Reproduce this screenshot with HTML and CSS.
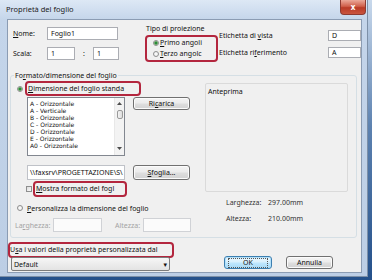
FILE: index.html
```html
<!DOCTYPE html>
<html lang="it">
<head>
    <meta charset="UTF-8">
    <title>Proprietà del foglio</title>
    <link rel="stylesheet" href="styles.css">
</head>
<body>
    <div class="desk">
        <div class="window">
            <div class="titlebar">
                <span class="title">Proprietà del foglio</span>
                <span class="close">x</span>
            </div>

            <div class="client">
                <!-- name / scale / projection / labels -->
                <div class="top">
                    <div class="ident">
                        <div class="row">
                            <span class="lbl"><u>N</u>ome:</span>
                            <span class="box w-name">Foglio1</span>
                        </div>
                        <div class="row">
                            <span class="lbl">Scala:</span>
                            <span class="box w-scale">1</span>
                            <span class="colon">:</span>
                            <span class="box w-scale2">1</span>
                        </div>
                    </div>

                    <div class="proj">
                        <div class="cap">Tipo di proiezione</div>
                        <div class="mark mark-proj">
                            <div class="opt"><span class="radio on"></span><span><u>P</u>rimo angoli</span></div>
                            <div class="opt"><span class="radio"></span><span><u>T</u>erzo angolc</span></div>
                        </div>
                    </div>

                    <div class="tags">
                        <div class="tag-row"><span class="tag-lbl">Etichetta di <u>v</u>ista</span><span class="box w-tag">D</span></div>
                        <div class="tag-row"><span class="tag-lbl">Etichetta ri<u>f</u>erimento</span><span class="box w-tag">A</span></div>
                    </div>
                </div>

                <fieldset class="group">
                    <legend>Fo<u>r</u>mato/dimensione del foglio</legend>
                    <div class="group-body">
                        <div class="left">
                            <div class="std">
                                <span class="radio on"></span>
                                <span class="mark mark-std"><u>D</u>imensione del foglio standa</span>
                            </div>

                            <div class="list-row">
                                <div class="list">
                                    <div class="items">
                                        <div>A - Orizzontale</div>
                                        <div>A - Verticale</div>
                                        <div>B - Orizzontale</div>
                                        <div>C - Orizzontale</div>
                                        <div>D - Orizzontale</div>
                                        <div>E - Orizzontale</div>
                                        <div>A0 - Orizzontale</div>
                                    </div>
                                    <div class="scroll">
                                        <span class="arrow">
                                            <svg width="5" height="3" viewBox="0 0 5 3"><path d="M0 3 L2.5 0 L5 3 Z" fill="#4d4d4d"/></svg>
                                        </span>
                                        <span class="thumb"></span>
                                        <span class="arrow down">
                                            <svg width="5" height="3" viewBox="0 0 5 3"><path d="M0 0 L2.5 3 L5 0 Z" fill="#4d4d4d"/></svg>
                                        </span>
                                    </div>
                                </div>
                                <span class="btn btn-small">Ri<u>c</u>arica</span>
                            </div>

                            <div class="path-row">
                                <span class="box w-path">\\faxsrv\PROGETTAZIONE\S\</span>
                                <span class="btn btn-path"><u>S</u>foglia...</span>
                            </div>

                            <div class="check-row">
                                <span class="check"></span>
                                <span class="mark mark-check"><u>M</u>ostra formato del fogl</span>
                            </div>

                            <div class="custom-row">
                                <span class="radio"></span>
                                <span><u>P</u>ersonalizza la dimensione del foglio</span>
                            </div>

                            <div class="dims-row">
                                <span class="dis-lbl w-larg">La<u>r</u>ghezza:</span>
                                <span class="box dis-box w-lbox"></span>
                                <span class="dis-lbl w-alt">Altezza:</span>
                                <span class="box dis-box w-abox"></span>
                            </div>
                        </div>

                        <div class="right">
                            <div class="preview">Anteprima</div>
                            <div class="size-row"><span class="size-lbl">Larghezza:</span><span>297.00mm</span></div>
                            <div class="size-row"><span class="size-lbl">Altezza:</span><span>210.00mm</span></div>
                        </div>
                    </div>
                </fieldset>

                <div class="bottom">
                    <div class="preset">
                        <span class="mark mark-preset">U<u>s</u>a i valori della proprietà personalizzata dal</span>
                        <span class="select">Default<span class="caret">▾</span></span>
                    </div>
                    <div class="actions">
                        <span class="btn btn-ok"><span class="focus">OK</span></span>
                        <span class="btn btn-cancel">Annulla</span>
                    </div>
                </div>
            </div>
        </div>
        <div class="edge"></div>
    </div>
</body>
</html>
```

FILE: styles.css
```css
:root {
    --face: #f0f0f0; --frame: #c4d5ea; --input-border: #abadb3;
    --mark: #b3263e; --disabled: #a3a3a3; --btn-border: #707070;
}
body { margin: 0; font-family: 'Noto Sans', 'DejaVu Sans', sans-serif; font-size: 7px; color: #111; }
u { text-decoration: underline; text-underline-offset: 1px; }

.desk { display: flex; width: 372px; height: 280px; background: linear-gradient(#c9d9ec, #5d82b0 45%, #24508a); }
.window { width: 368px; height: 277px; box-sizing: border-box; display: flex; flex-direction: column; background: linear-gradient(#dde8f5, var(--frame) 20px, #bccee5); border-right: 1px solid #7d90a8; border-bottom: 1px solid #7d90a8; }
.edge { flex: 1; }

.titlebar { height: 19px; display: flex; justify-content: space-between; align-items: flex-start; padding-left: 6px; flex-shrink: 0; }
.title { font-size: 7.5px; line-height: 18px; color: #1b1b1b; }
.close { width: 26px; height: 15px; box-sizing: border-box; margin-right: 1px; border: 1px solid #8d3a31; border-top: none; border-radius: 0 0 4px 4px; background: linear-gradient(#eba899, #d0604b 45%, #b93a26 55%, #c9553f); color: #fff; font-weight: bold; font-size: 8px; line-height: 13px; text-align: center; }

.client { flex: 1; margin: 0 5px 3px 7px; background: var(--face); border: 1px solid #8b9cb3; display: flex; flex-direction: column; }

.box { background: #fff; border: 1px solid var(--input-border); box-sizing: border-box; padding: 0 3px; white-space: nowrap; overflow: hidden; display: flex; align-items: center; }
.mark { border: 2px solid var(--mark); border-radius: 4px; box-sizing: border-box; white-space: nowrap; overflow: hidden; }
.radio { width: 6px; height: 6px; box-sizing: border-box; border-radius: 50%; border: 1px solid #8e8f8f; background: radial-gradient(#fff, #e6e6e6); flex-shrink: 0; }
.radio.on { background: radial-gradient(#2a8a3a 0 1.2px, #6fb56c 1.6px, #e9efe9 2.4px); }
.check { width: 6px; height: 6px; box-sizing: border-box; border: 1px solid #8e8f8f; background: linear-gradient(135deg, #dcdcdc, #fbfbfb); flex-shrink: 0; }

/* top block */
.top { display: flex; height: 39px; padding: 4px 0 0 5px; flex-shrink: 0; }
.ident { margin-top: 3px; width: 106px; display: flex; flex-direction: column; gap: 7px; }
.row { display: flex; align-items: center; height: 13px; }
.lbl { width: 34px; }
.w-name { width: 71px; height: 13px; }
.w-scale { width: 28px; height: 13px; }
.w-scale2 { width: 26px; height: 13px; }
.colon { width: 18px; text-align: center; }

.proj { margin-left: 26px; width: 74px; }
.cap { line-height: 9px; padding-left: 1px; }
.mark-proj { margin-top: 2px; height: 27px; padding: 0 0 0 6px; }
.opt { display: flex; align-items: center; gap: 1px; height: 11px; }

.tags { margin-left: 1px; padding-top: 6px; display: flex; flex-direction: column; gap: 6px; }
.tag-row { display: flex; align-items: center; height: 11px; }
.tag-lbl { width: 109px; }
.w-tag { width: 33px; height: 11px; }

/* paper size group */
.group { margin: 8px 4px 0 2px; padding: 0 8px 5px 6px; border: 1px solid #d5dfe5; border-radius: 3px; min-width: 0; }
.group legend { padding: 0 1px; margin-left: -3px; line-height: 9px; }
.group-body { display: flex; gap: 10px; }
.left { width: 178px; display: flex; flex-direction: column; }

.std { display: flex; align-items: center; margin-top: 1px; gap: 2px; }
.mark-std { width: 116px; height: 15px; padding-left: 1px; line-height: 11px; }

.list-row { display: flex; gap: 8px; margin: 1px 0 0 10px; align-items: flex-start; }
.list { width: 98px; height: 59px; box-sizing: border-box; border: 1px solid #828790; background: #fff; display: flex; overflow: hidden; }
.items { flex: 1; padding: 2px 0 0 2px; font-family: 'DejaVu Sans', sans-serif; font-size: 6px; line-height: 7px; white-space: nowrap; }
.scroll { width: 9px; display: flex; flex-direction: column; align-items: center; background: #f3f3f3; border-left: 1px solid #e8e8e8; padding-top: 2px; }
.arrow { height: 7px; display: flex; align-items: center; }
.arrow.down { margin-top: auto; margin-bottom: 3px; }
.thumb { width: 6px; height: 9px; margin-top: 3px; box-sizing: border-box; border: 1px solid #9a9a9a; border-radius: 2px; background: linear-gradient(90deg, #f4f4f4, #dcdcdc); }

.btn { box-sizing: border-box; border: 1px solid var(--btn-border); border-radius: 3px; background: linear-gradient(#f4f4f4 0, #ececec 45%, #dedede 55%, #d2d2d2); box-shadow: inset 0 0 0 1px #fbfbfb; display: flex; align-items: center; justify-content: center; white-space: nowrap; }
.btn-small { width: 57px; height: 13px; }
.btn-path { width: 57px; height: 15px; }

.path-row { display: flex; gap: 8px; margin: 9px 0 0 10px; }
.w-path { width: 98px; height: 15px; padding-left: 2px; border-color: #bfc2c8; }

.check-row { display: flex; align-items: center; gap: 1px; margin: 1px 0 0 9px; }
.mark-check { width: 94px; height: 16px; padding-left: 1px; line-height: 12px; }

.custom-row { display: flex; align-items: center; gap: 4px; height: 10px; margin-top: 6px; }

.dims-row { display: flex; align-items: center; height: 14px; margin: 5px 0 0 -2px; }
.dis-lbl { color: var(--disabled); }
.dis-box { height: 14px; border-color: #d0d2d6; background: #fbfbfb; }
.w-larg { width: 38px; }
.w-lbox { width: 49px; }
.w-alt { width: 28px; margin-left: 13px; }
.w-abox { width: 48px; }

.right { width: 143px; }
.preview { height: 109px; margin-top: 3px; box-sizing: border-box; border: 1px solid #dadada; border-radius: 2px; padding: 3px 2px; line-height: 9px; }
.size-row { display: flex; line-height: 10px; margin-top: 6px; color: #333; }
.size-row:first-of-type { margin-top: 10px; }
.size-lbl { width: 42px; margin-left: 21px; }

/* bottom */
.bottom { display: flex; margin-top: 4px; }
.preset { display: flex; flex-direction: column; }
.mark-preset { width: 166px; height: 16px; line-height: 12px; }
.select { width: 159px; height: 14px; margin: -1px 0 0 3px; box-sizing: border-box; border: 1px solid #7c7c7c; border-radius: 2px; background: linear-gradient(#f6f6f6, #e3e3e3); display: flex; align-items: center; padding: 0 2px; }
.caret { margin-left: auto; font-size: 7px; }
.actions { margin: 0 28px 2px auto; display: flex; gap: 14px; align-self: flex-end; }
.btn-ok { width: 48px; height: 13px; border-color: #3c7fb1; box-shadow: inset 0 0 0 1px #b3e0f9; background: linear-gradient(#eaf6fd, #d9f0fc 45%, #bee6fd 55%, #a7d9f5); }
.focus { padding: 0 14px; outline: 1px dotted #555; outline-offset: 0; line-height: 8px; }
.btn-cancel { width: 47px; height: 13px; }
```
